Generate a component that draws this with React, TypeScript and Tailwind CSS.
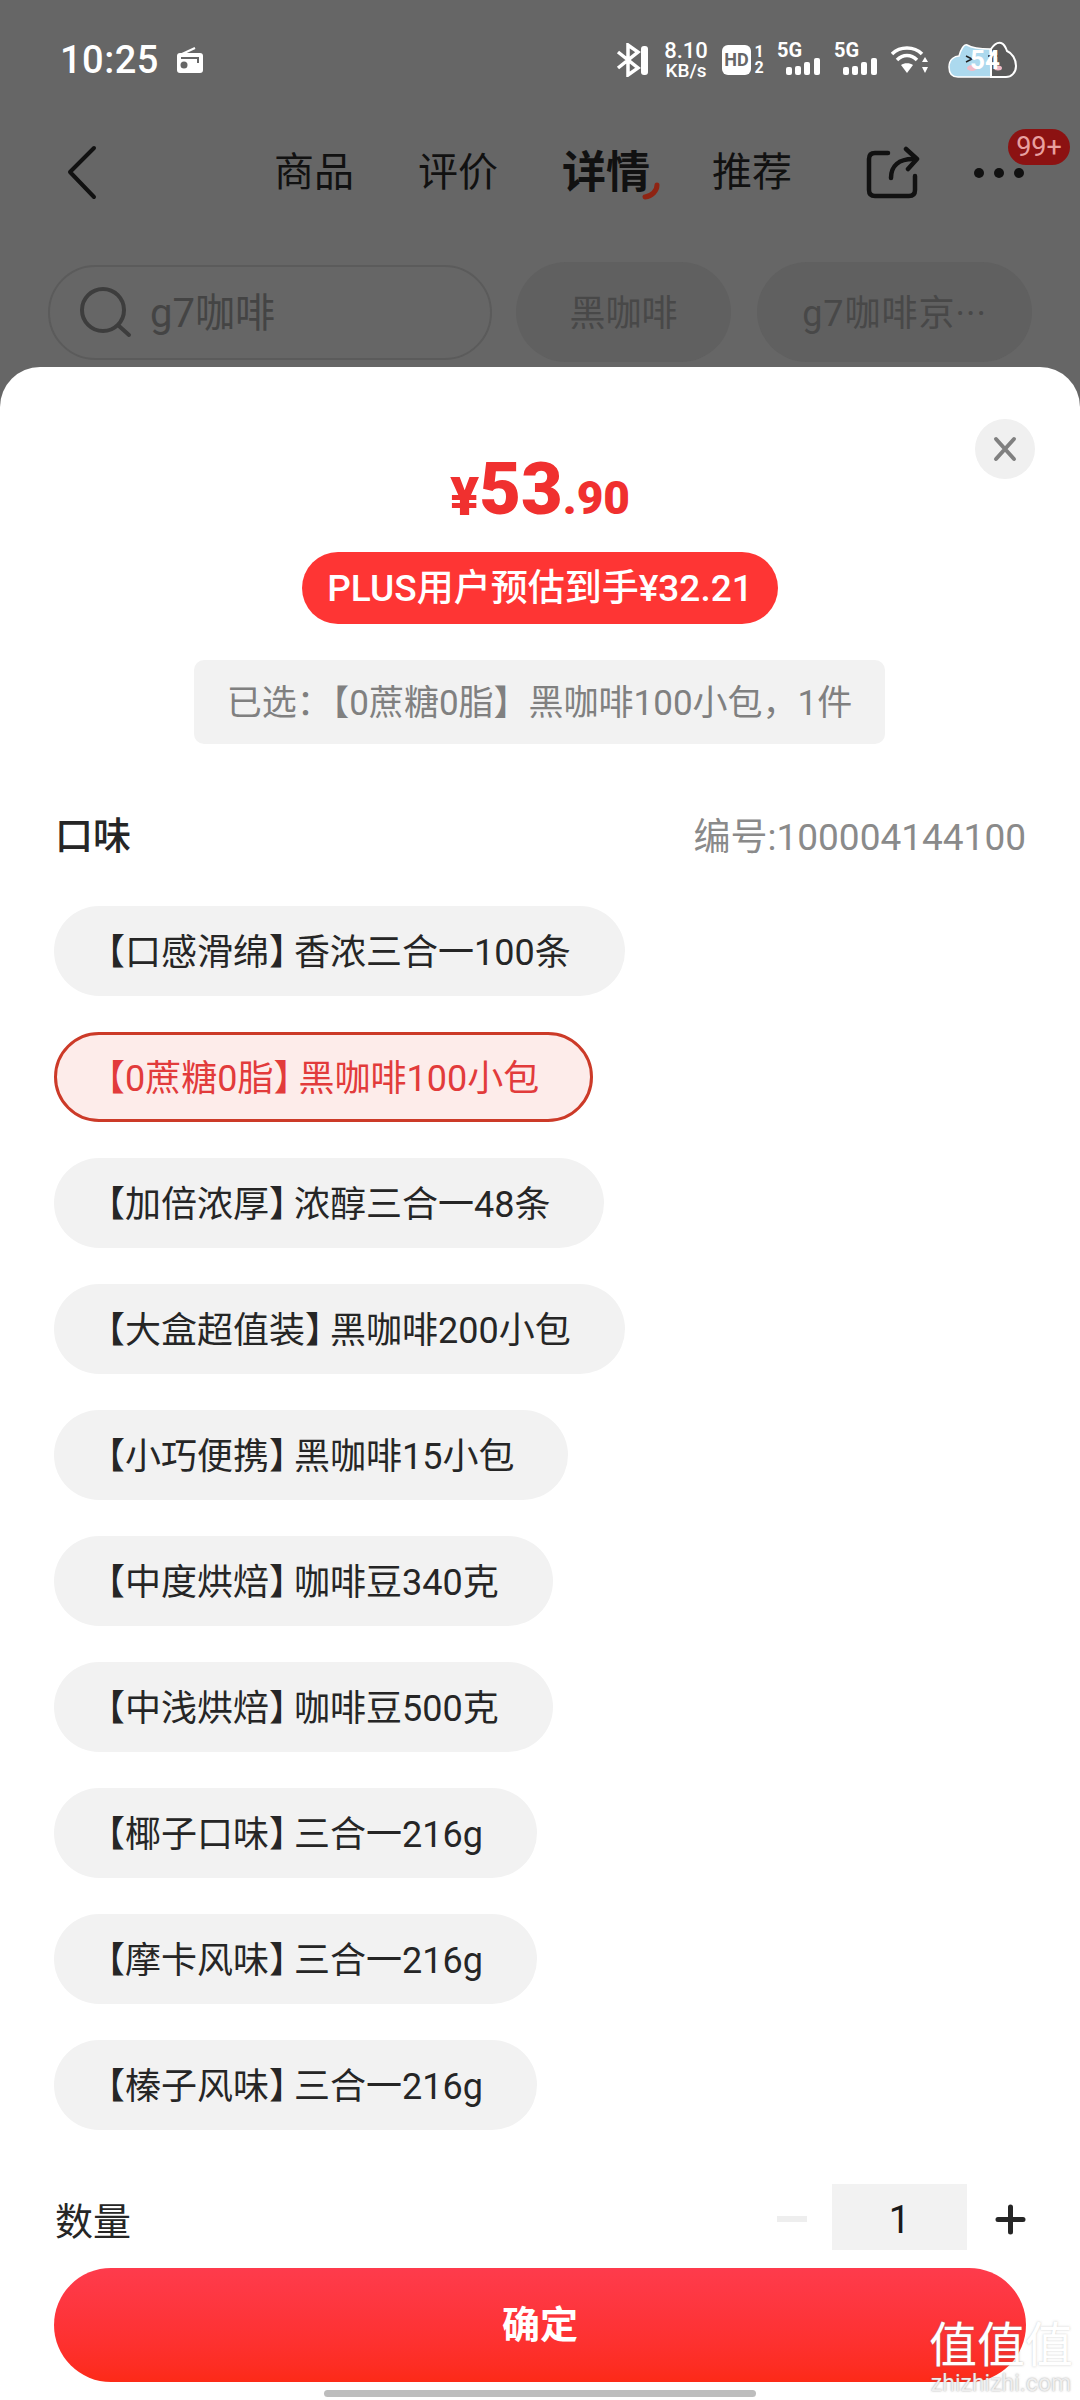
const chips = [
  ["【口感滑绵】", "香浓三合一100条"],
  ["【0蔗糖0脂】", "黑咖啡100小包"],
  ["【加倍浓厚】", "浓醇三合一48条"],
  ["【大盒超值装】", "黑咖啡200小包"],
  ["【小巧便携】", "黑咖啡15小包"],
  ["【中度烘焙】", "咖啡豆340克"],
  ["【中浅烘焙】", "咖啡豆500克"],
  ["【椰子口味】", "三合一216g"],
  ["【摩卡风味】", "三合一216g"],
  ["【榛子风味】", "三合一216g"],
];

function Signal() {
  return (
    <div className="relative w-[45px] h-[32px]">
      <span className="absolute left-0 top-[-4px] text-[20px] leading-[20px] font-bold text-white">5G</span>
      <svg className="absolute left-[9px] top-[13px]" width="36" height="20" viewBox="0 0 36 20" fill="#fff">
        <rect x="0" y="10" width="6" height="8" rx="2" />
        <rect x="9" y="9" width="6" height="9" rx="2" />
        <rect x="18" y="5" width="6" height="13" rx="2" />
        <rect x="28" y="1" width="6" height="17" rx="2" />
      </svg>
    </div>
  );
}

export default function App() {
  return (
    <div className="w-[1080px] h-[2400px] relative overflow-hidden bg-[#666666] flex flex-col font-['Roboto','Noto_Sans_CJK_SC',sans-serif]">
      {/* status bar */}
      <div className="h-[118px] shrink-0 flex items-center pl-[60px] pr-[62px] pt-[2px] text-white">
        <span className="text-[38px] font-medium leading-none tracking-[0.5px]">10:25</span>
        <svg className="ml-[17px]" width="28" height="28" viewBox="0 0 28 28">
          <path d="M6 8 L19 2" stroke="#fff" strokeWidth="2" fill="none" />
          <rect x="1" y="7" width="26" height="20" rx="3" fill="#fff" />
          <circle cx="8" cy="19" r="3.5" fill="#666" />
          <rect x="5" y="11" width="18" height="2" fill="#666" />
          <rect x="21" y="11" width="2" height="6" fill="#666" />
        </svg>
        <div className="flex-1" />
        <svg width="34" height="34" viewBox="0 0 34 34" fill="none" stroke="#fff" strokeWidth="3.5">
          <path d="M2 9 L22 25 L12 32 V2 L22 9 L2 25" />
          <rect x="25" y="3" width="7" height="29" rx="3" fill="#fff" stroke="none" />
        </svg>
        <div className="ml-[12px] w-[48px] flex flex-col items-center font-medium">
          <span className="text-[22px] leading-[21px]">8.10</span>
          <span className="text-[19px] leading-[19px]">KB/s</span>
        </div>
        <div className="ml-[12px] w-[29px] h-[30px] rounded-[6px] bg-white text-[#666666] text-[18px] font-bold flex items-center justify-center leading-none">HD</div>
        <div className="ml-[2px] w-[12px] flex flex-col items-center text-[16px] font-bold leading-[16px]">
          <span>1</span>
          <span>2</span>
        </div>
        <div className="ml-[12px]"><Signal /></div>
        <div className="ml-[12px]"><Signal /></div>
        <svg className="ml-[12px]" width="38" height="30" viewBox="0 0 38 30" fill="none" stroke="#fff" strokeWidth="3.5">
          <path d="M1 9 C9 1 23 1 31 9" />
          <path d="M6 15 C12 9 20 9 26 15" />
          <path d="M16 28 L10 20 C13 17.5 19 17.5 22 20 Z" fill="#fff" stroke="none" />
          <path d="M34 12 L37 17 H31 Z M34 28 L37 22 H31 Z" fill="#fff" stroke="none" />
        </svg>
        <div className="relative ml-[17px] w-[72px] h-[38px]">
          <svg width="72" height="38" viewBox="0 0 72 38">
            <path d="M3 26 C3 18 9 15 13 15 C15 8 18 3 21 4 C26 7 36 8 44 8 L45 36 H12 C6 36 3 32 3 26 Z" fill="#acd9ee" stroke="#fff" strokeWidth="1.5" />
            <path d="M45 8 C47 5 51 1 55 2 C58 3 60 7 61 10 C66 12 70 18 70 25 C70 32 65 36 60 36 H45 Z" fill="#5a5a5a" stroke="#fff" strokeWidth="2" />
            <path d="M42 15 H52 M20 15 L26 18 L20 21" stroke="#222" strokeWidth="1.5" fill="none" />
            <ellipse cx="26" cy="27" rx="5" ry="3" fill="#f0bcc8" />
            <ellipse cx="52" cy="27" rx="4" ry="2.5" fill="#f0bcc8" />
          </svg>
          <span className="absolute left-[24px] top-[5px] text-[26px] leading-[28px] font-bold text-white">54</span>
        </div>
      </div>

      {/* nav */}
      <div className="h-[110px] shrink-0 flex items-center relative">
        <svg className="ml-[66px]" width="32" height="56" viewBox="0 0 32 56" fill="none" stroke="#111" strokeWidth="4" strokeLinecap="round" strokeLinejoin="round">
          <path d="M28 3 L4 27 L28 52" />
        </svg>
        <span className="ml-[176px] text-[40px] leading-none text-[#111]">商品</span>
        <span className="ml-[64px] text-[40px] leading-none text-[#111]">评价</span>
        <div className="relative ml-[64px]">
          <span className="block text-[44px] leading-none font-bold text-[#111]">详情</span>
          <svg className="absolute left-[80px] top-[31px]" width="20" height="20" viewBox="0 0 20 20" fill="none">
            <path d="M15 3 C15 9 10 14 3 15" stroke="#8f2413" strokeWidth="5" strokeLinecap="round" />
          </svg>
        </div>
        <span className="ml-[62px] text-[40px] leading-none text-[#111]">推荐</span>
        <svg className="ml-[74px]" width="54" height="56" viewBox="0 0 54 56" fill="none" stroke="#111" strokeWidth="4.5" strokeLinecap="round" strokeLinejoin="round">
          <path d="M22 8 H9 C5 8 3 10 3 14 V45 C3 49 5 51 9 51 H43 C47 51 49 49 49 45 V31" />
          <path d="M25 33 C25 21 33 14 47 14" />
          <path d="M40 4 L51 14 L42 24" />
        </svg>
        <svg className="ml-[53px]" width="52" height="14" viewBox="0 0 52 14" fill="#111">
          <circle cx="6" cy="7" r="5" />
          <circle cx="26" cy="7" r="5" />
          <circle cx="46" cy="7" r="5" />
        </svg>
        <div className="absolute left-[1008px] top-[11px] w-[62px] h-[36px] rounded-full bg-[#8c1212] text-[#e8a0a0] text-[27px] leading-[36px] text-center">99+</div>
      </div>

      {/* search row */}
      <div className="shrink-0 flex items-start mt-[34px] pl-[48px] h-[105px]">
        <div className="w-[444px] h-[95px] mt-[3px] rounded-full border-2 border-[#5b5b5b] flex items-center pl-[30px]">
          <svg width="52" height="52" viewBox="0 0 52 52" fill="none" stroke="#3d3d3d" strokeWidth="4" strokeLinecap="round">
            <circle cx="23" cy="23" r="21" />
            <path d="M39 39 L49 48" />
          </svg>
          <span className="ml-[18px] pt-[2px] text-[40px] leading-none text-[#444444]">g7咖啡</span>
        </div>
        <div className="ml-[24px] w-[215px] h-[100px] pt-[4px] rounded-full bg-[#606060] flex items-center justify-center text-[36px] text-[#484848]">黑咖啡</div>
        <div className="ml-[26px] w-[275px] h-[100px] pt-[4px] rounded-full bg-[#606060] flex items-center justify-center text-[36px] tracking-[1px] text-[#484848]">g7咖啡京···</div>
      </div>

      {/* sheet */}
      <div className="flex-1 relative bg-white rounded-t-[40px] flex flex-col">
        <button className="absolute right-[45px] top-[52px] w-[60px] h-[60px] rounded-full bg-[#f0f0f0] flex items-center justify-center">
          <svg width="26" height="26" viewBox="0 0 26 26" stroke="#808080" strokeWidth="4" strokeLinecap="round">
            <path d="M4 3 L22 23 M22 3 L4 23" />
          </svg>
        </button>

        <div className="h-[160px] shrink-0 flex items-end justify-center pb-[7px] text-[#f0302f] font-bold leading-none">
          <span className="text-[54px] leading-[46px] font-black">¥</span>
          <span className="text-[72px] leading-[60px] font-black">53</span>
          <span className="text-[46px] leading-[44px] font-black">.90</span>
        </div>

        <div className="flex justify-center mt-[25px]">
          <div className="w-[476px] h-[72px] pt-[2px] rounded-full bg-[#fe3534] flex items-center justify-center text-white text-[37px] font-medium">PLUS用户预估到手¥32.21</div>
        </div>

        <div className="flex justify-center mt-[36px]">
          <div className="ml-[-1px] w-[691px] h-[84px] pt-[5px] rounded-[10px] bg-[#f2f2f2] flex items-center justify-center text-[#808080] text-[35px]">已选：【0蔗糖0脂】黑咖啡100小包，1件</div>
        </div>

        <div className="flex items-center justify-between pl-[55px] pr-[54px] mt-[70px] h-[44px]">
          <span className="text-[38px] font-medium text-[#262626]">口味</span>
          <span className="text-[37px] text-[#8a8a8a] pt-[3px]">编号:100004144100</span>
        </div>

        <div className="flex flex-col items-start gap-[36px] pl-[54px] mt-[48px]">
          {chips.map(([head, tail], i) => (
            <div
              key={head}
              className={
                i === 1
                  ? "h-[90px] pt-[3px] rounded-full border-[3px] border-[#cc3a28] bg-[#fdecea] text-[#e23b3b] pl-[32px] pr-[51px] flex items-center text-[36px] whitespace-nowrap"
                  : "h-[90px] pt-[3px] rounded-full bg-[#f2f2f2] text-[#262626] pl-[35px] pr-[54px] flex items-center text-[36px] whitespace-nowrap"
              }
            >
              <span className="mr-[-11px]">{head}</span>
              <span>{tail}</span>
            </div>
          ))}
        </div>

        <div className="flex items-center justify-between pl-[55px] pr-[54px] mt-[54px] h-[66px]">
          <span className="text-[38px] text-[#262626] pt-[10px]">数量</span>
          <div className="flex items-center">
            <div className="w-[30px] h-[6px] mt-[3px] bg-[#eeeeee]" />
            <div className="ml-[25px] w-[135px] h-[66px] pt-[6px] bg-[#f2f2f2] flex items-center justify-center text-[38px] text-[#1a1a1a]">1</div>
            <svg className="ml-[28px] mt-[5px]" width="31" height="31" viewBox="0 0 31 31" stroke="#262626" strokeWidth="5" strokeLinecap="round">
              <path d="M3 15.5 H28 M15.5 3 V28" />
            </svg>
          </div>
        </div>

        <div className="mx-[54px] mt-[18px] h-[114px] rounded-full bg-gradient-to-b from-[#fe3b4c] to-[#fd2a17] flex items-center justify-center text-white text-[38px] font-bold">确定</div>
        <div className="mx-auto mt-[8px] w-[432px] h-[7px] rounded-full bg-[#bdbdbd]" />
      </div>

      {/* watermark */}
      <div className="absolute left-[928px] top-[2319px] w-[146px] flex flex-col items-center text-white [text-shadow:0_0_2px_rgba(120,120,120,0.7)]">
        <div className="flex text-[48px] leading-[54px]">
          <span>值</span>
          <span>值</span>
          <span className="opacity-60">值</span>
        </div>
        <span className="text-[23px] leading-[21px] text-[#eeeeee]">zhizhizhi.com</span>
      </div>
    </div>
  );
}
